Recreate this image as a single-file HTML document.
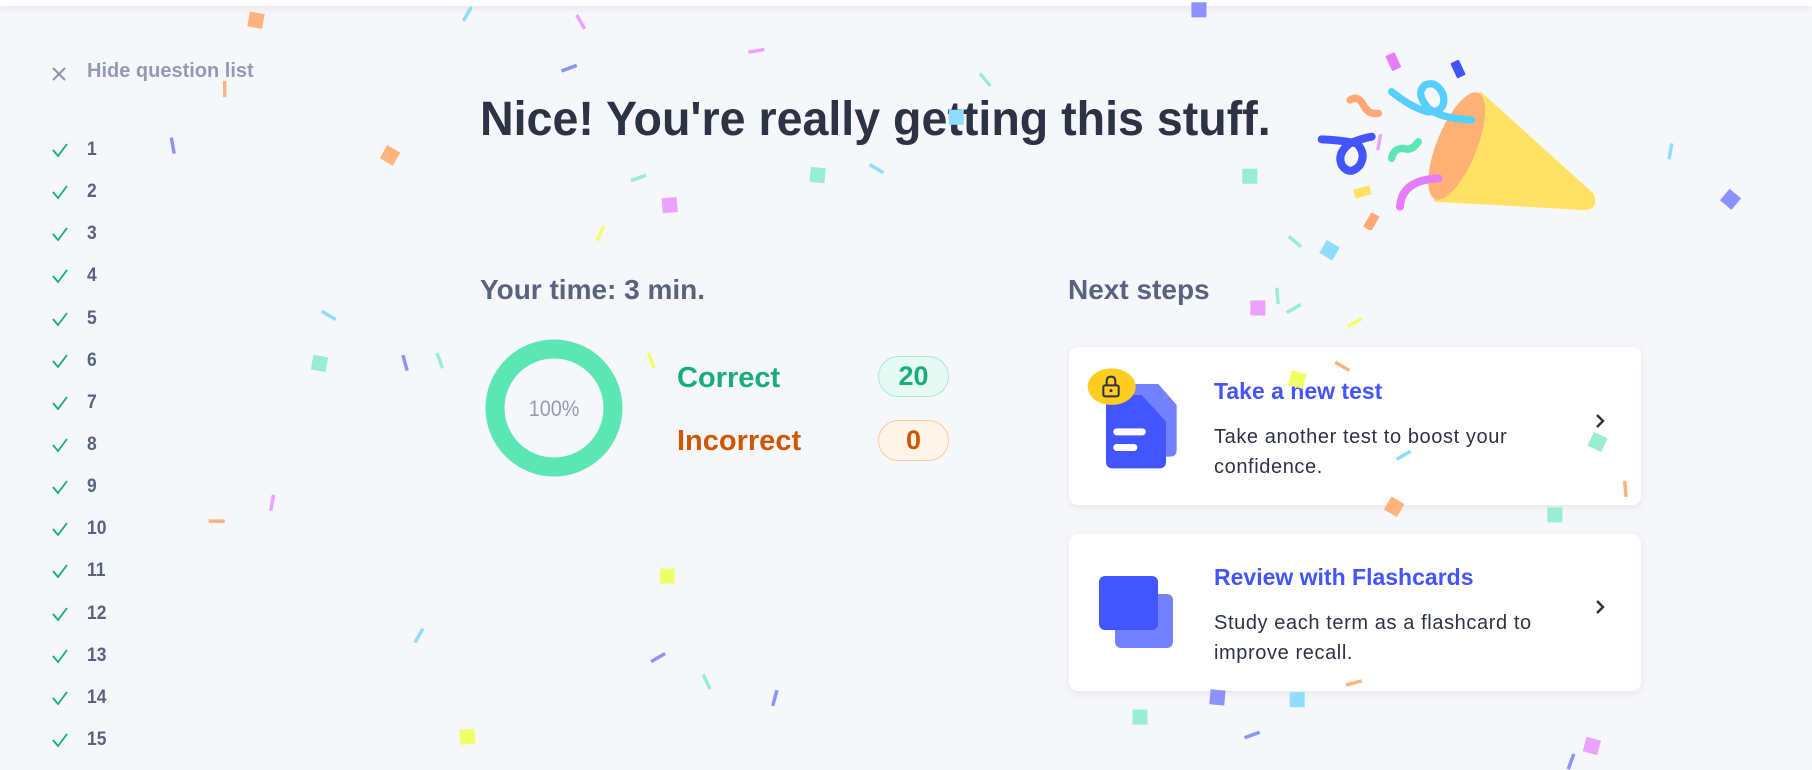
<!DOCTYPE html>
<html><head><meta charset="utf-8"><style>
*{margin:0;padding:0;box-sizing:border-box}
body{width:1812px;height:768px;overflow:hidden;background:#f6f7fb;font-family:"Liberation Sans",sans-serif;position:relative}
.topbar{position:absolute;left:0;top:0;width:1812px;height:6px;background:#fff;box-shadow:0 2px 8px rgba(0,0,0,.08)}
.abs{position:absolute}
.sq{position:absolute;width:13px;height:13px}
.sl{position:absolute;width:3px;height:14px}
.n{position:absolute;left:87px;font-size:19px;font-weight:bold;color:#586380;transform:scaleX(.92);transform-origin:left}
.ck{position:absolute;left:51px}
.card{position:absolute;left:1069px;width:572px;background:#fff;border-radius:9px;box-shadow:0 2px 8px rgba(40,50,90,.09)}
.ct{position:absolute;left:145px;font-size:23px;font-weight:bold;color:#4255ff;white-space:nowrap}
.cd{position:absolute;left:145px;font-size:20px;letter-spacing:.6px;line-height:30px;color:#2e3245;width:340px}
.chev{position:absolute;left:526px}
</style></head><body>
<div class="topbar"></div>

<svg class="abs" style="left:51px;top:66px" width="16" height="16" viewBox="0 0 16 16"><path d="M2 2L14 14M14 2L2 14" stroke="#8c93ab" stroke-width="2"/></svg>
<div class="abs" style="left:87px;top:60px;font-size:20px;font-weight:bold;color:#939bb4;white-space:nowrap">Hide question list</div>

<div id="list"></div>

<div class="abs" style="left:480px;top:92px;font-size:48px;font-weight:bold;color:#2e3245;white-space:nowrap;transform:scaleX(.97);transform-origin:left">Nice! You're really getting this stuff.</div>

<div class="abs" style="left:480px;top:274px;font-size:28px;font-weight:bold;color:#586380;white-space:nowrap">Your time: 3 min.</div>
<div class="abs" style="left:1068px;top:274px;font-size:28px;font-weight:bold;color:#586380;white-space:nowrap">Next steps</div>

<svg class="abs" style="left:484px;top:338px" width="140" height="140" viewBox="0 0 140 140"><circle cx="70" cy="70" r="59" fill="none" stroke="#5ce6b4" stroke-width="19"/><text x="70" y="78" text-anchor="middle" font-family="Liberation Sans" font-size="22" fill="#939bb4" transform="translate(7 0) scale(.9 1)">100%</text></svg>

<div class="abs" style="left:677px;top:362px;font-size:29px;font-weight:bold;color:#18ae79">Correct</div>
<div class="abs" style="left:878px;top:356px;width:71px;height:41px;border-radius:21px;background:#e6faf3;border:1px solid #a8ecd4;color:#18ae79;font-size:27px;font-weight:bold;text-align:center;line-height:39px">20</div>
<div class="abs" style="left:677px;top:425px;font-size:29px;font-weight:bold;color:#d05700">Incorrect</div>
<div class="abs" style="left:878px;top:420px;width:71px;height:41px;border-radius:21px;background:#fff4ea;border:1px solid #ffc99a;color:#d05700;font-size:27px;font-weight:bold;text-align:center;line-height:39px">0</div>

<div class="card" style="top:347px;height:158px">
 <div class="ct" style="top:31px">Take a new test</div>
 <div class="cd" style="top:75px">Take another test to boost your confidence.</div>
 <svg class="chev" style="top:66px" width="10" height="16" viewBox="0 0 10 16"><path d="M2 2L8 8L2 14" stroke="#2e3245" stroke-width="2.4" fill="none"/></svg>
</div>
<svg class="abs" style="left:1080px;top:360px" width="120" height="120" viewBox="0 0 360 360">
 <path d="M150 72H235L290 135V270Q290 290 270 290H150Q130 290 130 270V92Q130 72 150 72Z" fill="#7481ff"/>
 <path d="M98 105H185L258 185V305Q258 325 238 325H98Q78 325 78 305V125Q78 105 98 105Z" fill="#4255ff"/>
 <rect x="100" y="205" width="97" height="21" rx="10" fill="#fff"/>
 <rect x="100" y="252" width="72" height="21" rx="10" fill="#fff"/>
 <ellipse cx="95" cy="80" rx="72" ry="55" fill="#ffcd1f"/>
 <path d="M80 76V64Q80 50 93 50Q106 50 106 64V76" stroke="#2e3245" stroke-width="6" fill="none"/>
 <rect x="70" y="76" width="46" height="33" rx="5" stroke="#2e3245" stroke-width="6" fill="none"/>
 <circle cx="93" cy="92" r="4.5" fill="#2e3245"/>
</svg>

<div class="card" style="top:534px;height:157px">
 <div class="ct" style="top:30px">Review with Flashcards</div>
 <div class="cd" style="top:74px">Study each term as a flashcard to improve recall.</div>
 <svg class="chev" style="top:65px" width="10" height="16" viewBox="0 0 10 16"><path d="M2 2L8 8L2 14" stroke="#2e3245" stroke-width="2.4" fill="none"/></svg>
</div>
<svg class="abs" style="left:1093px;top:575px" width="95" height="80" viewBox="0 0 95 80">
 <rect x="22" y="19" width="58" height="54" rx="6" fill="#7481ff"/>
 <rect x="6" y="1" width="59" height="54" rx="6" fill="#4255ff"/>
</svg>

<svg class="abs" style="left:1300px;top:30px" width="340" height="200" viewBox="0 0 1020 600">
 <path d="M540 183L880 490Q900 540 850 540L400 515Z" fill="#ffe263"/>
 <ellipse cx="470" cy="348" rx="60" ry="172" transform="rotate(22 470 348)" fill="#ffb074"/>
 <path d="M275 185Q330 230 380 245Q440 250 430 195Q410 150 375 165Q345 190 385 235Q420 265 515 270" stroke="#55cfff" stroke-width="22" fill="none" stroke-linecap="round"/>
 <path d="M65 328Q120 330 170 340Q200 370 180 405Q150 440 125 405Q110 370 150 340Q185 325 215 320" stroke="#4255ff" stroke-width="24" fill="none" stroke-linecap="round"/>
 <path d="M150 210Q175 195 190 225Q205 255 235 250" stroke="#ffa873" stroke-width="22" fill="none" stroke-linecap="round"/>
 <path d="M275 385Q280 355 310 355Q335 365 355 335" stroke="#5ce6b4" stroke-width="22" fill="none" stroke-linecap="round"/>
 <path d="M300 530Q305 450 415 445" stroke="#e47cfb" stroke-width="24" fill="none" stroke-linecap="round"/>
 <rect x="265" y="70" width="30" height="50" rx="4" transform="rotate(-25 280 95)" fill="#e47cfb"/>
 <rect x="460" y="92" width="28" height="50" rx="4" transform="rotate(-25 474 117)" fill="#4255ff"/>
 <rect x="162" y="472" width="50" height="28" rx="3" transform="rotate(-15 187 486)" fill="#ffe263"/>
 <rect x="200" y="550" width="28" height="50" rx="3" transform="rotate(30 214 575)" fill="#ffa873"/>
</svg>

<div id="conf" class="abs" style="left:0;top:0;width:1568px;height:665px;transform:scale(1.1556);transform-origin:0 0"></div>

<script>
var L=document.getElementById('list'),h='';
for(var i=1;i<=15;i++){var y=150+(i-1)*42.14;
h+='<svg class="ck" style="top:'+(y-8)+'px" width="18" height="16" viewBox="0 0 18 16"><path d="M2 8L7 14L16 2" stroke="#18ae79" stroke-width="1.8" fill="none"/></svg><div class="n" style="top:'+(y-11)+'px">'+i+'</div>';}
L.innerHTML=h;
var C={o:'#ffb27a',b:'#8fdcff',p:'#e9a3ff',i:'#8a92ff',m:'#98edd3',y:'#f0ff66'};
var d=[[221,17,'o',1,10],[409,11,'b',0,30],[507,18,'p',0,-30],[1037,8,'i',1,0],[659,43,'p',0,80],[497,58,'i',0,70],[857,68,'m',0,-40],[154,125,'i',0,-10],[337,134,'o',1,30],[827,101,'b',1,0],[707,151,'m',1,5],[763,145,'b',0,-60],[557,153,'m',0,70],[579,177,'p',1,-5],[524,201,'y',0,25],[1081,152,'m',1,0],[1125,208,'m',0,-50],[1150,216,'b',1,30],[1198,122,'p',0,10],[1497,172,'i',1,40],[1450,130,'b',0,10],[289,272,'b',0,-60],[276,314,'m',1,10],[355,313,'i',0,-15],[385,311,'m',0,-20],[568,311,'y',0,-20],[1088,266,'p',1,0],[1124,266,'m',0,60],[1110,255,'m',0,-5],[1177,278,'y',0,60],[1166,316,'o',0,-60],[1122,328,'y',1,15],[1219,393,'b',0,60],[1382,382,'m',1,25],[1411,422,'o',0,-5],[1206,438,'o',1,30],[1345,445,'m',1,0],[240,434,'p',0,10],[577,498,'y',1,0],[367,549,'b',0,30],[574,568,'i',0,60],[616,589,'m',0,-25],[675,603,'i',0,15],[1053,603,'i',1,5],[1122,605,'b',1,0],[986,620,'m',1,0],[1088,635,'i',0,70],[1377,645,'p',1,15],[1364,658,'i',0,20],[404,637,'y',1,-5],[1176,590,'o',0,75],[192,450,'o',0,90],[199,76,'o',0,0]];
var s='';d.forEach(function(a){s+='<div class="'+(a[3]?'sq':'sl')+'" style="left:'+(a[0]-6)+'px;top:'+(a[1]-6)+'px;background:'+C[a[2]]+';transform:rotate('+a[4]+'deg)"></div>';});
document.getElementById('conf').innerHTML=s;
</script>
</body></html>
